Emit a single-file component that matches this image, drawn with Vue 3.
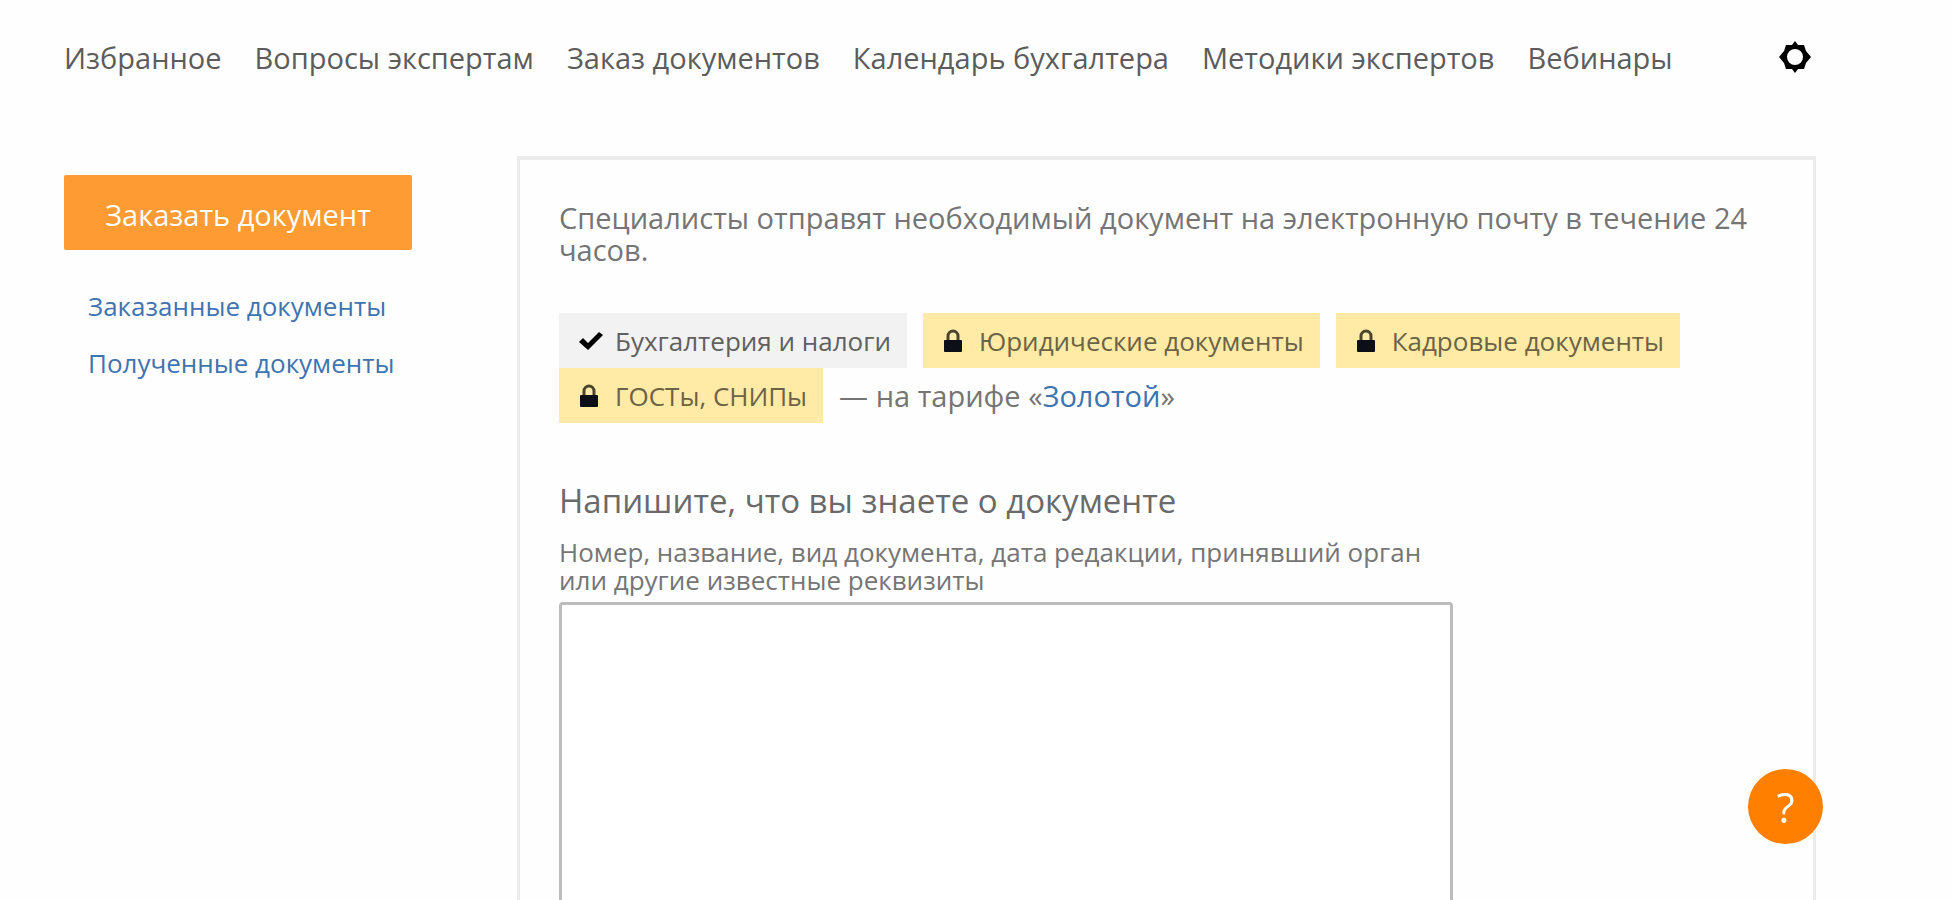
<script setup>
import { ref } from 'vue'

const navItems = [
  'Избранное',
  'Вопросы экспертам',
  'Заказ документов',
  'Календарь бухгалтера',
  'Методики экспертов',
  'Вебинары',
]
const sideLinks = ['Заказанные документы', 'Полученные документы']
const topics = [
  { title: 'Бухгалтерия и налоги', open: true },
  { title: 'Юридические документы', open: false },
  { title: 'Кадровые документы', open: false },
  { title: 'ГОСТы, СНИПы', open: false },
]
const details = ref('')
</script>

<template>
  <div class="page">
    <header class="topbar">
      <nav class="nav">
        <a v-for="item in navItems" :key="item" href="#">{{ item }}</a>
      </nav>
      <button class="gear" type="button" aria-label="Настройки">
        <svg viewBox="0 0 32 32" aria-hidden="true">
          <path
            fill-rule="evenodd"
            d="M16 0 19 4 25 4 27 10 32 16 27 22 25 28 19 28 16 32 13 28 7 28 5 22 0 16 5 10 7 4 13 4ZM16 8A8 8 0 1 0 16 24A8 8 0 1 0 16 8Z"
          />
        </svg>
      </button>
    </header>

    <div class="body">
      <aside class="side">
        <button class="order" type="button">Заказать документ</button>
        <nav class="side-nav">
          <a v-for="link in sideLinks" :key="link" href="#">{{ link }}</a>
        </nav>
      </aside>

      <main class="panel">
        <p class="lead">
          Специалисты отправят необходимый документ на электронную почту в течение 24 часов.
        </p>

        <div class="topics">
          <button
            v-for="topic in topics"
            :key="topic.title"
            type="button"
            class="topic"
            :class="{ locked: !topic.open }"
          >
            <svg v-if="topic.open" class="check" viewBox="0 0 24 20" aria-hidden="true">
              <path d="M0 11 4 7 9 12 20 1 24 4 9 19Z" />
            </svg>
            <svg v-else class="lock" viewBox="0 0 20 24" aria-hidden="true">
              <path d="M5 12V7a5 5 0 0 1 10 0v5" fill="none" stroke="#4a442f" stroke-width="3" />
              <rect x="1" y="11" width="18" height="12" rx="1" fill="#0c0f18" />
            </svg>
            <span>{{ topic.title }}</span>
          </button>
          <span class="plan">— на тарифе «<a href="#">Золотой</a>»</span>
        </div>

        <label class="heading" for="details">Напишите, что вы знаете о документе</label>
        <p id="hint" class="hint">
          Номер, название, вид документа, дата редакции, принявший орган или другие известные
          реквизиты
        </p>
        <textarea id="details" v-model="details" aria-describedby="hint"></textarea>
      </main>
    </div>

    <button class="help" type="button" aria-label="Помощь">?</button>
  </div>
</template>

<style>
body {
  background: #fefefe;
}
</style>

<style scoped>
.page {
  box-sizing: border-box;
  height: 100vh;
  overflow: hidden;
  padding: 0 7% 0 64px;
  background: #fefefe;
  color: #757575;
  font-family: "Open Sans", "Noto Sans", sans-serif;
  font-size: 29px;
}
button {
  border: 0;
  padding: 0;
  font: inherit;
  color: inherit;
  cursor: pointer;
}
a {
  color: #3f74b0;
  text-decoration: none;
}
.topbar {
  display: flex;
  align-items: center;
  justify-content: space-between;
  height: 114px;
  box-sizing: border-box;
  padding-right: 5px;
}
.nav {
  display: flex;
  gap: 33px;
  white-space: nowrap;
}
.nav a {
  color: #5c5c5c;
}
.gear {
  width: 32px;
  height: 32px;
  background: none;
}
.gear svg {
  display: block;
  width: 32px;
  height: 32px;
}
.body {
  display: flex;
  align-items: flex-start;
  gap: 105px;
  padding-top: 42px;
}
.side {
  flex: 0 0 348px;
  padding-top: 19px;
}
.order {
  width: 100%;
  height: 75px;
  padding-top: 4px;
  background: #ff9b33;
  color: #fff;
  border-radius: 2px;
}
.side-nav {
  display: flex;
  flex-direction: column;
  gap: 25px;
  padding: 40px 0 0 24px;
  font-size: 26px;
  line-height: 32px;
  white-space: nowrap;
}
.panel {
  flex: 1;
  min-width: 0;
  box-sizing: border-box;
  padding: 42px 39px 48px;
  border: solid #ebebeb;
  border-width: 4px 3px;
}
.lead {
  margin: 0;
  line-height: 32px;
}
.topics {
  display: flex;
  flex-wrap: wrap;
  align-items: center;
  column-gap: 16px;
  margin-top: 47px;
}
.topic {
  display: flex;
  align-items: center;
  height: 55px;
  padding: 0 16px 0 20px;
  background: #f2f2f2;
  color: #606060;
  font-size: 26px;
  white-space: nowrap;
}
.topic.locked {
  background: #ffeba6;
  color: #6c6346;
}
.check {
  width: 24px;
  height: 20px;
  margin-right: 12px;
}
.lock {
  width: 20px;
  height: 24px;
  margin-right: 16px;
}
.heading {
  display: block;
  margin-top: 58px;
  font-size: 33px;
  line-height: 40px;
  color: #6a6a6a;
}
.hint {
  max-width: 894px;
  margin: 17px 0 0;
  font-size: 26px;
  line-height: 28px;
}
textarea {
  display: block;
  box-sizing: border-box;
  width: 100%;
  max-width: 894px;
  height: 400px;
  margin-top: 8px;
  padding: 12px;
  border: 3px solid #bcbcbc;
  border-radius: 4px;
  background: #fff;
  color: #555;
  font: inherit;
  resize: none;
}
.help {
  position: fixed;
  right: 130px;
  bottom: 56px;
  width: 75px;
  height: 75px;
  border-radius: 50%;
  background: #ff7f00;
  color: #fff;
  font-size: 42px;
  line-height: 75px;
}
</style>
